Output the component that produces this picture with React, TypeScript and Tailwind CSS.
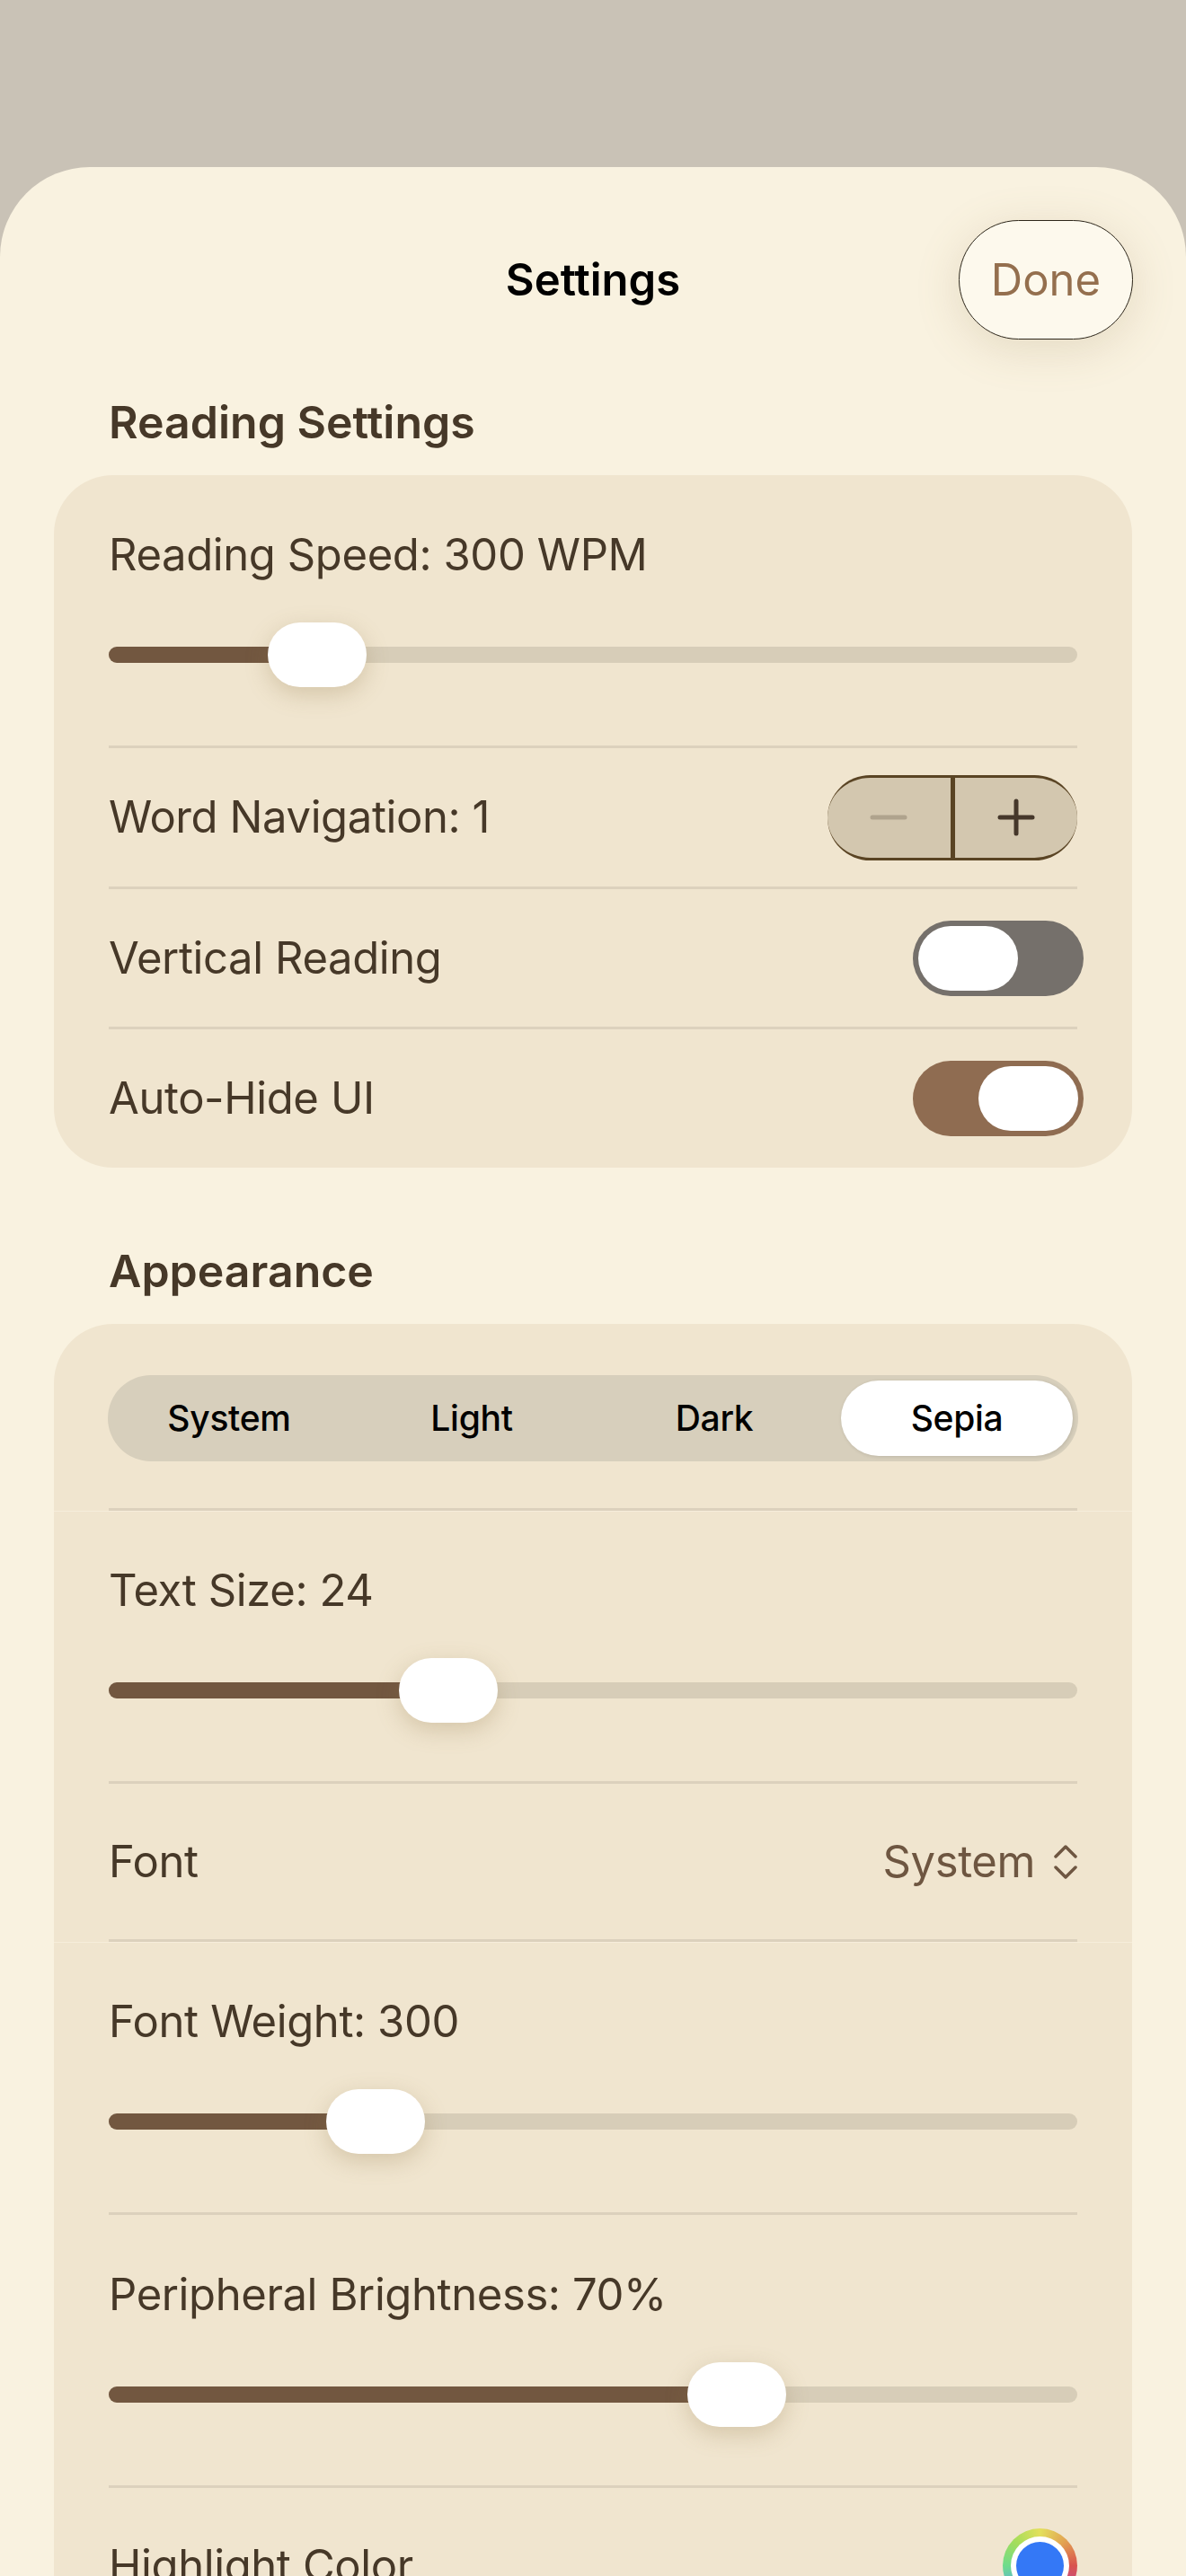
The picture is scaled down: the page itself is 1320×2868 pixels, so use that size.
import type {ReactNode} from 'react'

const sliders = {
  speed: 232,
  textSize: 378,
  weight: 297,
  brightness: 699,
}

function Divider() {
  return <div className="mx-[61px] h-[3px] bg-[#dcd1bd]" />
}

function SectionBreak() {
  return (
    <div className="h-[3px] shadow-[0_1px_0_#f6eddb]">
      <Divider />
    </div>
  )
}

function SliderRow({label, offset}: {label: string; offset: number}) {
  return (
    <div className="px-[61px] pt-[59px] pb-[65px]">
      <p className="text-[49px] leading-[60px] tracking-[-0.4px] text-[#463828]">{label}</p>
      <div className="relative mt-[45px] flex h-[72px] items-center">
        <div className="h-[18px] w-full overflow-hidden rounded-full bg-[#d7cdb8]">
          <div className="h-full bg-[#725740]" style={{width: offset}} />
        </div>
        <div
          className="absolute top-0 h-[72px] w-[110px] rounded-full bg-white shadow-[0_8px_26px_rgba(140,115,70,0.28)]"
          style={{left: offset - 55}}
        />
      </div>
    </div>
  )
}

function Row({label, height, children}: {label: string; height: string; children: ReactNode}) {
  return (
    <div className={`flex items-center justify-between px-[61px] ${height}`}>
      <p className="text-[49px] leading-[60px] tracking-[-0.4px] text-[#463828]">{label}</p>
      {children}
    </div>
  )
}

function Toggle({on}: {on: boolean}) {
  return (
    <div
      className={`-mr-[7px] flex h-[84px] w-[190px] items-center rounded-full p-[6px] ${
        on ? 'justify-end bg-[#8f6c51]' : 'justify-start bg-[#75706b]'
      }`}
    >
      <div className="h-[72px] w-[111px] rounded-full bg-white" />
    </div>
  )
}

function Stepper() {
  return (
    <div className="flex h-[95px] w-[278px] overflow-hidden rounded-full border-y-[3px] border-[#5a4424] bg-[#d3c7af]">
      <div className="flex flex-1 items-center justify-center">
        <svg width="44" height="8" viewBox="0 0 44 8">
          <line x1="4" y1="4" x2="40" y2="4" stroke="#afa38d" strokeWidth="5" strokeLinecap="round" />
        </svg>
      </div>
      <div className="w-[5px] bg-[#5a4424]" />
      <div className="flex flex-1 items-center justify-center">
        <svg width="44" height="44" viewBox="0 0 44 44">
          <line x1="4" y1="22" x2="40" y2="22" stroke="#45372a" strokeWidth="5" strokeLinecap="round" />
          <line x1="22" y1="4" x2="22" y2="40" stroke="#45372a" strokeWidth="5" strokeLinecap="round" />
        </svg>
      </div>
    </div>
  )
}

const themes = ['System', 'Light', 'Dark', 'Sepia']

function Segmented() {
  return (
    <div className="flex h-[96px] rounded-full bg-[#d7cfbc]">
      {themes.map((t) => (
        <div key={t} className="flex flex-1">
          {t === 'Sepia' ? (
            <div className="m-[6px] flex flex-1 items-center justify-center rounded-full bg-white shadow-[1px_1px_4px_rgba(0,0,0,0.12)]">
              <span className="text-[39px] font-medium tracking-[-0.3px] text-black">{t}</span>
            </div>
          ) : (
            <div className="flex flex-1 items-center justify-center">
              <span className="text-[39px] font-medium tracking-[-0.3px] text-black">{t}</span>
            </div>
          )}
        </div>
      ))}
    </div>
  )
}

function Heading({children, className}: {children: ReactNode; className: string}) {
  return (
    <h2 className={`pl-[61px] text-[50px] font-semibold leading-[60px] text-[#463828] ${className}`}>
      {children}
    </h2>
  )
}

export default function App() {
  return (
    <div className="h-[2868px] w-[1320px] overflow-hidden bg-[#c9c2b6] pt-[186px] font-['Inter','Noto_Sans',sans-serif]">
      <div className="h-full rounded-t-[100px] bg-[#f9f2e0] px-[60px]">
        {/* Header */}
        <div className="grid grid-cols-[1fr_auto_1fr] items-center pt-[59px]">
          <div />
          <h1 className="text-[49px] font-semibold leading-[60px] text-black">Settings</h1>
          <div className="-mr-[1px] flex justify-end">
            <button className="h-[133px] w-[194px] rounded-full border-[1.5px] border-[#2d261a] bg-[#fdf9ed] text-[49px] text-[#946f4e] shadow-[0_10px_50px_rgba(150,125,80,0.2)]">
              Done
            </button>
          </div>
        </div>

        <Heading className="mt-[62px]">Reading Settings</Heading>

        <div className="mt-[29px] rounded-[66px] bg-[#f0e5cf]">
          <SliderRow label="Reading Speed: 300 WPM" offset={sliders.speed} />
          <Divider />
          <Row label="Word Navigation: 1" height="h-[154px]">
            <Stepper />
          </Row>
          <Divider />
          <Row label="Vertical Reading" height="h-[153px]">
            <Toggle on={false} />
          </Row>
          <Divider />
          <Row label="Auto-Hide UI" height="h-[154px]">
            <Toggle on />
          </Row>
        </div>

        <Heading className="mt-[85px]">Appearance</Heading>

        <div className="mt-[29px] rounded-t-[66px] bg-[#f0e5cf]">
          <div className="px-[60px] pt-[57px] pb-[52px]">
            <Segmented />
          </div>
          <SectionBreak />
          <SliderRow label="Text Size: 24" offset={sliders.textSize} />
          <Divider />
          <Row label="Font" height="h-[173px]">
            <div className="flex items-center gap-[21px]">
              <span className="text-[49px] leading-[60px] tracking-[-0.4px] text-[#6e5641]">System</span>
              <svg width="26" height="40" viewBox="0 0 26 40" fill="none">
                <path d="M2 14 L13 3 L24 14" stroke="#6e5641" strokeWidth="3.5" strokeLinecap="round" strokeLinejoin="round" />
                <path d="M2 26 L13 37 L24 26" stroke="#6e5641" strokeWidth="3.5" strokeLinecap="round" strokeLinejoin="round" />
              </svg>
            </div>
          </Row>
          <SectionBreak />
          <SliderRow label="Font Weight: 300" offset={sliders.weight} />
          <Divider />
          <SliderRow label="Peripheral Brightness: 70%" offset={sliders.brightness} />
          <Divider />
          <Row label="Highlight Color" height="h-[173px]">
            <div className="flex h-[83px] w-[83px] items-center justify-center rounded-full bg-[conic-gradient(#e3e05c,#e2a352,#d9534f,#c24d9a,#7b5ad6,#5aa9e6,#6fdc8c,#a5dd5a,#e3e05c)]">
              <div className="flex h-[65px] w-[65px] items-center justify-center rounded-full bg-white">
                <div className="h-[53px] w-[53px] rounded-full bg-[#3478f6]" />
              </div>
            </div>
          </Row>
        </div>
      </div>
    </div>
  )
}
